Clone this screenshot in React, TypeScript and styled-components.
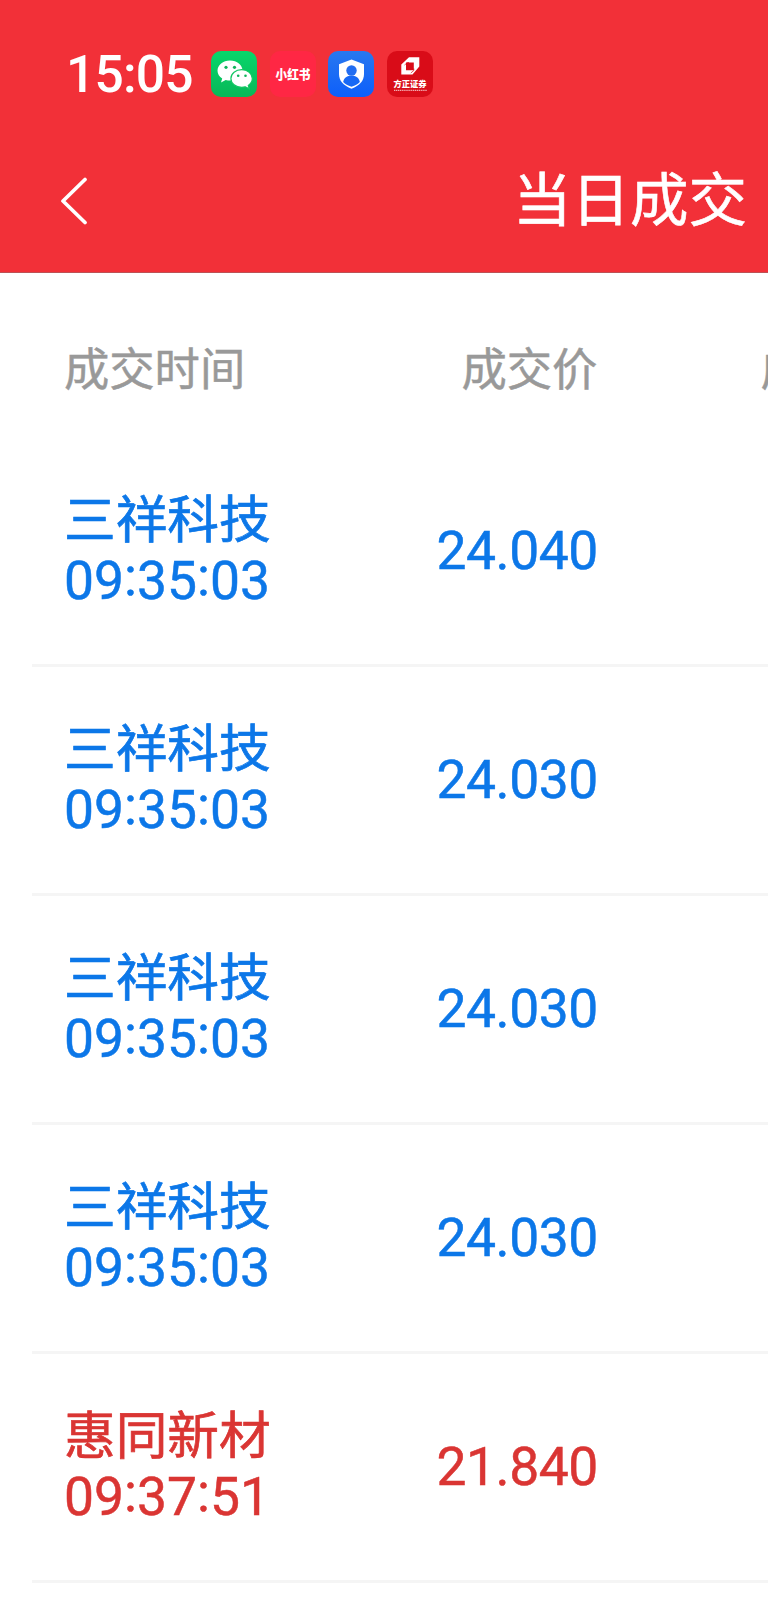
import React from 'react';
import styled, { createGlobalStyle } from 'styled-components';

const Global = createGlobalStyle`
  * { box-sizing: border-box; }
  body { margin: 0; background: #fff; overflow: hidden; font-family: "Noto Sans CJK SC", sans-serif; }
`;
const Page = styled.div`width: 768px; height: 1606px; overflow: hidden; background: #fff;`;
const Top = styled.header`height: 273px; background: #f23038; color: #fff; overflow: hidden; border-bottom: 1px solid #bc5255;`;
const Status = styled.div`display: flex; align-items: center; height: 46px; margin-top: 51px; padding-left: 66px;`;
const Clock = styled.div`width: 145px; padding-top: 1px; font: 500 51.5px/46px Roboto, sans-serif; letter-spacing: -0.8px; white-space: nowrap;`;
const Icons = styled.div`display: flex; gap: 12.7px; svg { display: block; }`;
const Nav = styled.div`display: flex; justify-content: space-between; align-items: flex-start; height: 80px; margin-top: 57px; padding: 0 21px 0 60px;`;
const BackIcon = styled.svg`margin-top: 23px;`;
const Title = styled.h1`
  margin: 0; font-size: 58.5px; line-height: 84px; font-weight: 400;
  white-space: nowrap; -webkit-text-stroke: 0.6px currentColor;
`;
const Head = styled.div`
  display: flex; height: 165px; padding: 63px 0 0 64px; color: #999; font-size: 45.3px;
  line-height: 60px; white-space: nowrap; -webkit-text-stroke: 0.5px currentColor;
`;
const Column = styled.div<{ $width: number }>`flex: 0 0 ${p => p.$width}px;`;
const Row = styled.div<{ $red?: boolean }>`
  display: flex; height: 229px; margin-left: 32px; padding: 48px 0 0 32px; border-bottom: 3px solid #f5f5f5;
  color: ${p => (p.$red ? '#da3533' : '#0c77e8')}; white-space: nowrap;
`;
const Info = styled.div`width: 372.5px;`;
const Name = styled.div`height: 65px; font-size: 51.7px; line-height: 60px; -webkit-text-stroke: 0.7px currentColor;`;
const Num = styled.div`font: 400 53.4px/60px Roboto, sans-serif; -webkit-text-stroke: 0.5px currentColor;`;
const Colon = styled.span`line-height: 0; vertical-align: 4px;`;
const Price = styled(Num)`padding-top: 35px; letter-spacing: -0.45px;`;

const rows = [
  ['三祥科技', '09:35:03', '24.040'],
  ['三祥科技', '09:35:03', '24.030'],
  ['三祥科技', '09:35:03', '24.030'],
  ['三祥科技', '09:35:03', '24.030'],
  ['惠同新材', '09:37:51', '21.840'],
];

const Time = ({ value }: { value: string }) => (
  <Num>
    {value.split(':').map((part, i) => (
      <React.Fragment key={i}>{i > 0 && <Colon>:</Colon>}{part}</React.Fragment>
    ))}
  </Num>
);

const WeChat = () => (
  <svg width="46" height="46" viewBox="0 0 46 46">
    <defs><linearGradient id="wg" x2="0" y2="1"><stop stopColor="#08d66b" /><stop offset="1" stopColor="#08b858" /></linearGradient></defs>
    <rect width="46" height="46" rx="10" fill="url(#wg)" />
    <path d="M19 9.500C12 9.500 6.500 14 6.500 19.700c0 3.300 1.900 6 4.700 7.900L10 31.500l4.700-2.500c1.400.4 2.800.6 4.300.6 7 0 12.500-4.400 12.500-9.900S26 9.500 19 9.500Z" fill="#fff" />
    <path d="M30.700 18.700c-6 0-10.800 3.800-10.800 8.800s4.800 8.800 10.800 8.800c1.300 0 2.500-.2 3.600-.5l4 2-1-3.400c2.500-1.600 4-4.100 4-6.900 0-5-4.700-8.800-10.600-8.800Z" fill="#fff" stroke="#12c762" strokeWidth="1.200" />
    <g fill="#10b45a"><circle cx="15" cy="16.300" r="1.600" /><circle cx="23.500" cy="16.300" r="1.600" /><circle cx="27.200" cy="24.700" r="1.300" /><circle cx="34.500" cy="24.700" r="1.300" /></g>
  </svg>
);
const RedNote = () => (
  <svg width="46" height="46" viewBox="0 0 46 46">
    <rect width="46" height="46" rx="10" fill="#ff2744" />
    <text x="23" y="28" textAnchor="middle" textLength="35" lengthAdjust="spacingAndGlyphs" fontSize="13" fontWeight="900" fill="#fff">小红书</text>
  </svg>
);
const Shield = () => (
  <svg width="46" height="46" viewBox="0 0 46 46">
    <defs><linearGradient id="bg" x2="0" y2="1"><stop stopColor="#2878ef" /><stop offset="1" stopColor="#0d5ffb" /></linearGradient></defs>
    <rect width="46" height="46" rx="10" fill="url(#bg)" />
    <path d="M23.500 8.500 36 13.200V23c0 7-4.500 11.700-12.500 14.700C15.500 34.700 11 30 11 23V13.200Z" fill="#fff" />
    <circle cx="23.500" cy="19.500" r="5.200" fill="#226df1" />
    <path d="M15.200 31c.7-4.400 4-6.300 8.300-6.300s7.600 1.900 8.300 6.300c-2 2.200-4.500 3.400-8.300 4.800-3.800-1.400-6.300-2.600-8.300-4.800Z" fill="#1768f5" />
  </svg>
);
const Founder = () => (
  <svg width="46" height="46" viewBox="0 0 46 46">
    <rect width="46" height="46" rx="10" fill="#d90c18" />
    <path fillRule="evenodd" d="M22 6.300H32.300V15.500L25.500 23.500H14.300V13.500ZM19 11.500V19.200H26.800V11.500Z" fill="#fff" />
    <path d="M22 11.500H20.500L17.500 14M26.800 17.500V19.500L23.800 22" stroke="#d90c18" strokeWidth=".7" fill="none" />
    <text x="23" y="35.800" textAnchor="middle" textLength="33" lengthAdjust="spacingAndGlyphs" fontSize="8.500" fontWeight="900" fill="#fff">方正证券</text>
    <path d="M7 39.300H40" stroke="#fff" strokeWidth="1.300" strokeDasharray="1.300 .6" opacity=".65" />
  </svg>
);

export default function App() {
  return (
    <Page>
      <Global />
      <Top>
        <Status><Clock>15:05</Clock><Icons><WeChat /><RedNote /><Shield /><Founder /></Icons></Status>
        <Nav>
          <BackIcon width="28" height="48" viewBox="0 0 28 48" fill="none" stroke="#fff" strokeWidth="3.7" strokeLinecap="round" strokeLinejoin="round"><path d="M25 2.500L3 24L25 45.500" /></BackIcon>
          <Title>当日成交</Title>
        </Nav>
      </Top>
      <Head>
        <Column $width={397.500}>成交时间</Column>
        <Column $width={299}>成交价</Column>
        <Column $width={180}>成交量</Column>
      </Head>
      {rows.map(([name, time, price], i) => (
        <Row key={i} $red={i === 4}><Info><Name>{name}</Name><Time value={time} /></Info><Price>{price}</Price></Row>
      ))}
    </Page>
  );
}
